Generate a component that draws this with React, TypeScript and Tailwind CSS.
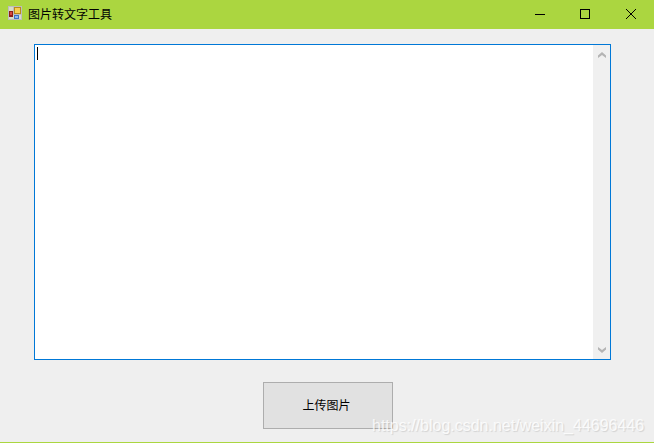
// icono de la app (ventana de WinForms por defecto)
function AppIcon() {
  return (
    <svg width="14" height="14" viewBox="0 0 14 14" className="mb-[3px] shrink-0" shapeRendering="crispEdges">
      <rect x="0.5" y="0.5" width="13" height="13" fill="#d8dcc8" stroke="#bdbdbd" />
      <rect x="5.5" y="0.5" width="8" height="8" fill="none" stroke="#bdbdbd" />
      <rect x="1" y="5" width="4" height="6" fill="#8f1d18" />
      <rect x="2" y="6" width="2" height="3" fill="#d9483f" />
      <rect x="6" y="1" width="7" height="7" fill="#b98a1c" />
      <rect x="7" y="2" width="5" height="5" fill="#f8cf4f" />
      <rect x="6" y="9" width="5" height="4" fill="#3f74c4" />
      <rect x="7" y="10" width="3" height="2" fill="#8db8f2" />
    </svg>
  );
}

function Chevron({ up }: { up?: boolean }) {
  return (
    <svg width="8" height="6" viewBox="0 0 8 6" fill="#b4b4b4">
      <path d={up ? 'M4 0 8 3.5 8 6 4 3 0 6 0 3.5Z' : 'M0 0 4 3 8 0 8 2.5 4 6 0 2.5Z'} />
    </svg>
  );
}

export default function App() {
  return (
    <div className="relative flex h-[443px] w-[654px] flex-col overflow-hidden bg-[#efefef] font-['Liberation_Sans','Noto_Sans_CJK_SC',sans-serif]">
      {/* Barra de título */}
      <div className="flex h-[29px] shrink-0 items-center bg-[#abd640] pl-2">
        <AppIcon />
        <span className="ml-[6px] text-[12px] leading-none text-black">图片转文字工具</span>
        <div className="ml-auto flex h-full items-center">
          <button className="flex h-full w-[46px] items-center justify-center pb-[2px] pl-[1px]">
            <svg width="10" height="10" viewBox="0 0 10 10" shapeRendering="crispEdges">
              <path d="M0 5.5H10" stroke="#000" />
            </svg>
          </button>
          <button className="flex h-full w-[46px] items-center justify-center pb-[2px]">
            <svg width="10" height="10" viewBox="0 0 10 10" shapeRendering="crispEdges">
              <rect x="0.5" y="0.5" width="9" height="9" fill="none" stroke="#000" />
            </svg>
          </button>
          <button className="flex h-full w-[46px] items-center justify-center pb-[2px]">
            <svg width="10" height="10" viewBox="0 0 10 10">
              <path d="M0 0 10 10M10 0 0 10" stroke="#000" strokeWidth="1" />
            </svg>
          </button>
        </div>
      </div>

      {/* Contenido */}
      <div className="flex flex-1 flex-col items-start pl-[34px] pt-[15px]">
        <div className="flex h-[316px] w-[577px] border border-[#0078d7] bg-white">
          <div className="flex-1 pl-[2px] pt-[2px]">
            <div className="h-[13px] w-px bg-black" />
          </div>
          <div className="flex w-[17px] flex-col items-center justify-between bg-[#f0f0f0] pb-[6px] pt-[7px]">
            <Chevron up />
            <Chevron />
          </div>
        </div>
        <button className="ml-[229px] mt-[22px] flex h-[47px] w-[130px] items-center justify-center border border-[#adadad] bg-[#e1e1e1] pr-[3px] text-[12px] text-black">
          上传图片
        </button>
      </div>

      {/* Línea inferior */}
      <div className="h-px shrink-0 bg-[#abd640]" />

      {/* Marca de agua */}
      <span className="absolute left-[372px] top-[417px] text-[16px] leading-[18px] text-white/80 [text-shadow:1px_1px_1px_rgba(0,0,0,0.12)]">
        https://blog.csdn.net/weixin_44696446
      </span>
    </div>
  );
}
